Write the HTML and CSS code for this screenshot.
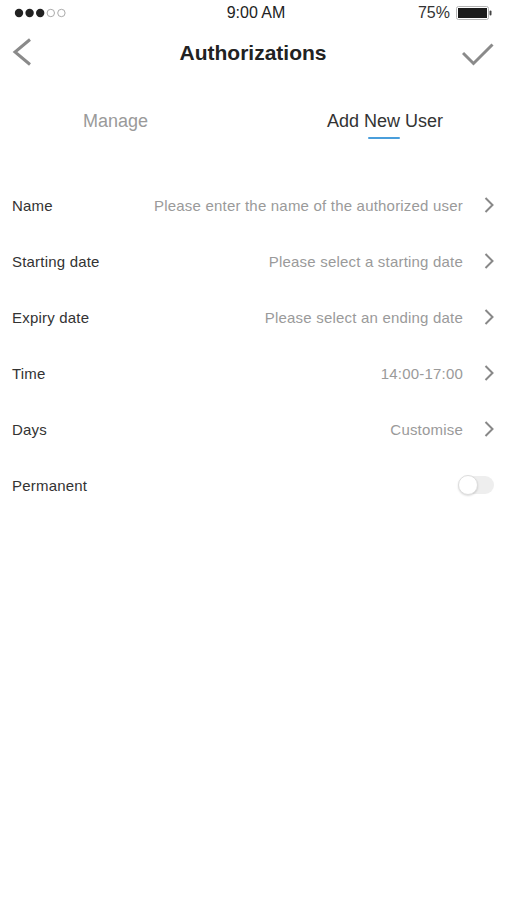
FILE: index.html
```html
<!DOCTYPE html>
<html lang="en">
<head>
  <meta charset="UTF-8">
  <title>Authorizations</title>
  <link rel="stylesheet" href="styles.css">
</head>
<body>
  <div class="phone">
    <!-- Barra de estado -->
    <div class="status-bar">
      <svg class="signal" width="53" height="10" viewBox="0 0 53 10">
        <circle cx="5" cy="5" r="4.2" fill="#222"/>
        <circle cx="15.6" cy="5" r="4.2" fill="#222"/>
        <circle cx="26.2" cy="5" r="4.2" fill="#222"/>
        <circle cx="36.8" cy="5" r="3.7" fill="none" stroke="#aaa" stroke-width="1"/>
        <circle cx="47.4" cy="5" r="3.7" fill="none" stroke="#aaa" stroke-width="1"/>
      </svg>
      <span class="clock">9:00 AM</span>
      <div class="battery-wrap">
        <span>75%</span>
        <svg width="36" height="14" viewBox="0 0 36 14">
          <rect x="0.5" y="0.5" width="32" height="13" rx="2" fill="#fff" stroke="#b5b5b5"/>
          <rect x="2" y="2" width="29" height="10" fill="#1b1b1b"/>
          <rect x="33.5" y="4.5" width="2" height="5" rx="1" fill="#444"/>
        </svg>
      </div>
    </div>

    <!-- Barra de navegación -->
    <div class="nav-bar">
      <div class="nav-btn">
        <svg width="32" height="30" viewBox="0 0 32 30">
          <polyline points="18,1.5 3,14 18,26.5" fill="none" stroke="#8a8a8a" stroke-width="3"/>
        </svg>
      </div>
      <h1>Authorizations</h1>
      <div class="nav-btn right">
        <svg width="32" height="26" viewBox="0 0 32 26">
          <polyline points="1,11 11.5,21.5 30.5,2.5" fill="none" stroke="#8a8a8a" stroke-width="3"/>
        </svg>
      </div>
    </div>

    <!-- Pestañas -->
    <div class="tabs">
      <div class="tab">Manage</div>
      <div class="tab active">Add New User<span class="underline"></span></div>
    </div>

    <!-- Formulario -->
    <div class="form-list">
      <div class="row">
        <span class="label">Name</span>
        <span class="value">Please enter the name of the authorized user</span>
        <svg class="chevron" width="10" height="16" viewBox="0 0 10 16"><polyline points="1.5,1 8.5,8 1.5,15" fill="none" stroke="#888" stroke-width="2"/></svg>
      </div>
      <div class="row">
        <span class="label">Starting date</span>
        <span class="value">Please select a starting date</span>
        <svg class="chevron" width="10" height="16" viewBox="0 0 10 16"><polyline points="1.5,1 8.5,8 1.5,15" fill="none" stroke="#888" stroke-width="2"/></svg>
      </div>
      <div class="row">
        <span class="label">Expiry date</span>
        <span class="value">Please select an ending date</span>
        <svg class="chevron" width="10" height="16" viewBox="0 0 10 16"><polyline points="1.5,1 8.5,8 1.5,15" fill="none" stroke="#888" stroke-width="2"/></svg>
      </div>
      <div class="row">
        <span class="label">Time</span>
        <span class="value">14:00-17:00</span>
        <svg class="chevron" width="10" height="16" viewBox="0 0 10 16"><polyline points="1.5,1 8.5,8 1.5,15" fill="none" stroke="#888" stroke-width="2"/></svg>
      </div>
      <div class="row">
        <span class="label">Days</span>
        <span class="value">Customise</span>
        <svg class="chevron" width="10" height="16" viewBox="0 0 10 16"><polyline points="1.5,1 8.5,8 1.5,15" fill="none" stroke="#888" stroke-width="2"/></svg>
      </div>
      <div class="row">
        <span class="label">Permanent</span>
        <span class="toggle"><span class="knob"></span></span>
      </div>
    </div>
  </div>
</body>
</html>
```

FILE: styles.css
```css
body {
  margin: 0;
  background-color: #fff;
  font-family: 'Liberation Sans', Arial, sans-serif;
  color: #333;
}
.phone {
  width: 507px;
  min-height: 900px;
}
.status-bar {
  height: 26px;
  display: grid;
  grid-template-columns: 1fr auto 1fr;
  align-items: center;
  padding: 0 15px 0 14px;
  font-size: 16px;
  color: #222;
}
.clock {
  margin-left: 6px;
}
.battery-wrap {
  display: flex;
  align-items: center;
  justify-content: flex-end;
  gap: 6px;
  color: #333;
}
.nav-bar {
  height: 54px;
  display: flex;
  align-items: center;
  justify-content: space-between;
  padding: 0 13px 0 12px;
}
.nav-btn {
  width: 32px;
  display: flex;
}
.nav-btn.right {
  justify-content: flex-end;
  padding-top: 3px;
}
h1 {
  margin: 0;
  font-size: 21px;
  font-weight: bold;
  color: #222;
}
.tabs {
  display: flex;
  gap: 179px;
  padding: 29px 0 0 83px;
}
.tab {
  display: flex;
  flex-direction: column;
  align-items: center;
  font-size: 18px;
  line-height: 24px;
  color: #9a9a9a;
}
.tab.active {
  color: #333;
}
.underline {
  width: 32px;
  height: 2px;
  margin-top: 4px;
  margin-right: 3px;
  background-color: #4a9edb;
  border-radius: 1px;
}
.form-list {
  margin-top: 38px;
}
.row {
  height: 56px;
  display: flex;
  align-items: center;
  padding: 0 13px 0 12px;
  font-size: 15px;
  letter-spacing: 0.2px;
}
.label {
  flex: 1;
  color: #333;
}
.value {
  color: #9a9a9a;
  margin-right: 21px;
}
.chevron {
  display: block;
}
.toggle {
  position: relative;
  width: 35px;
  height: 18px;
  background-color: #eee;
  border-radius: 9px;
}
.knob {
  position: absolute;
  left: -1px;
  top: -1px;
  width: 18px;
  height: 18px;
  border-radius: 50%;
  background-color: #fff;
  border: 1px solid #ddd;
  box-shadow: 0 1px 2px rgba(0, 0, 0, 0.15);
}
```
